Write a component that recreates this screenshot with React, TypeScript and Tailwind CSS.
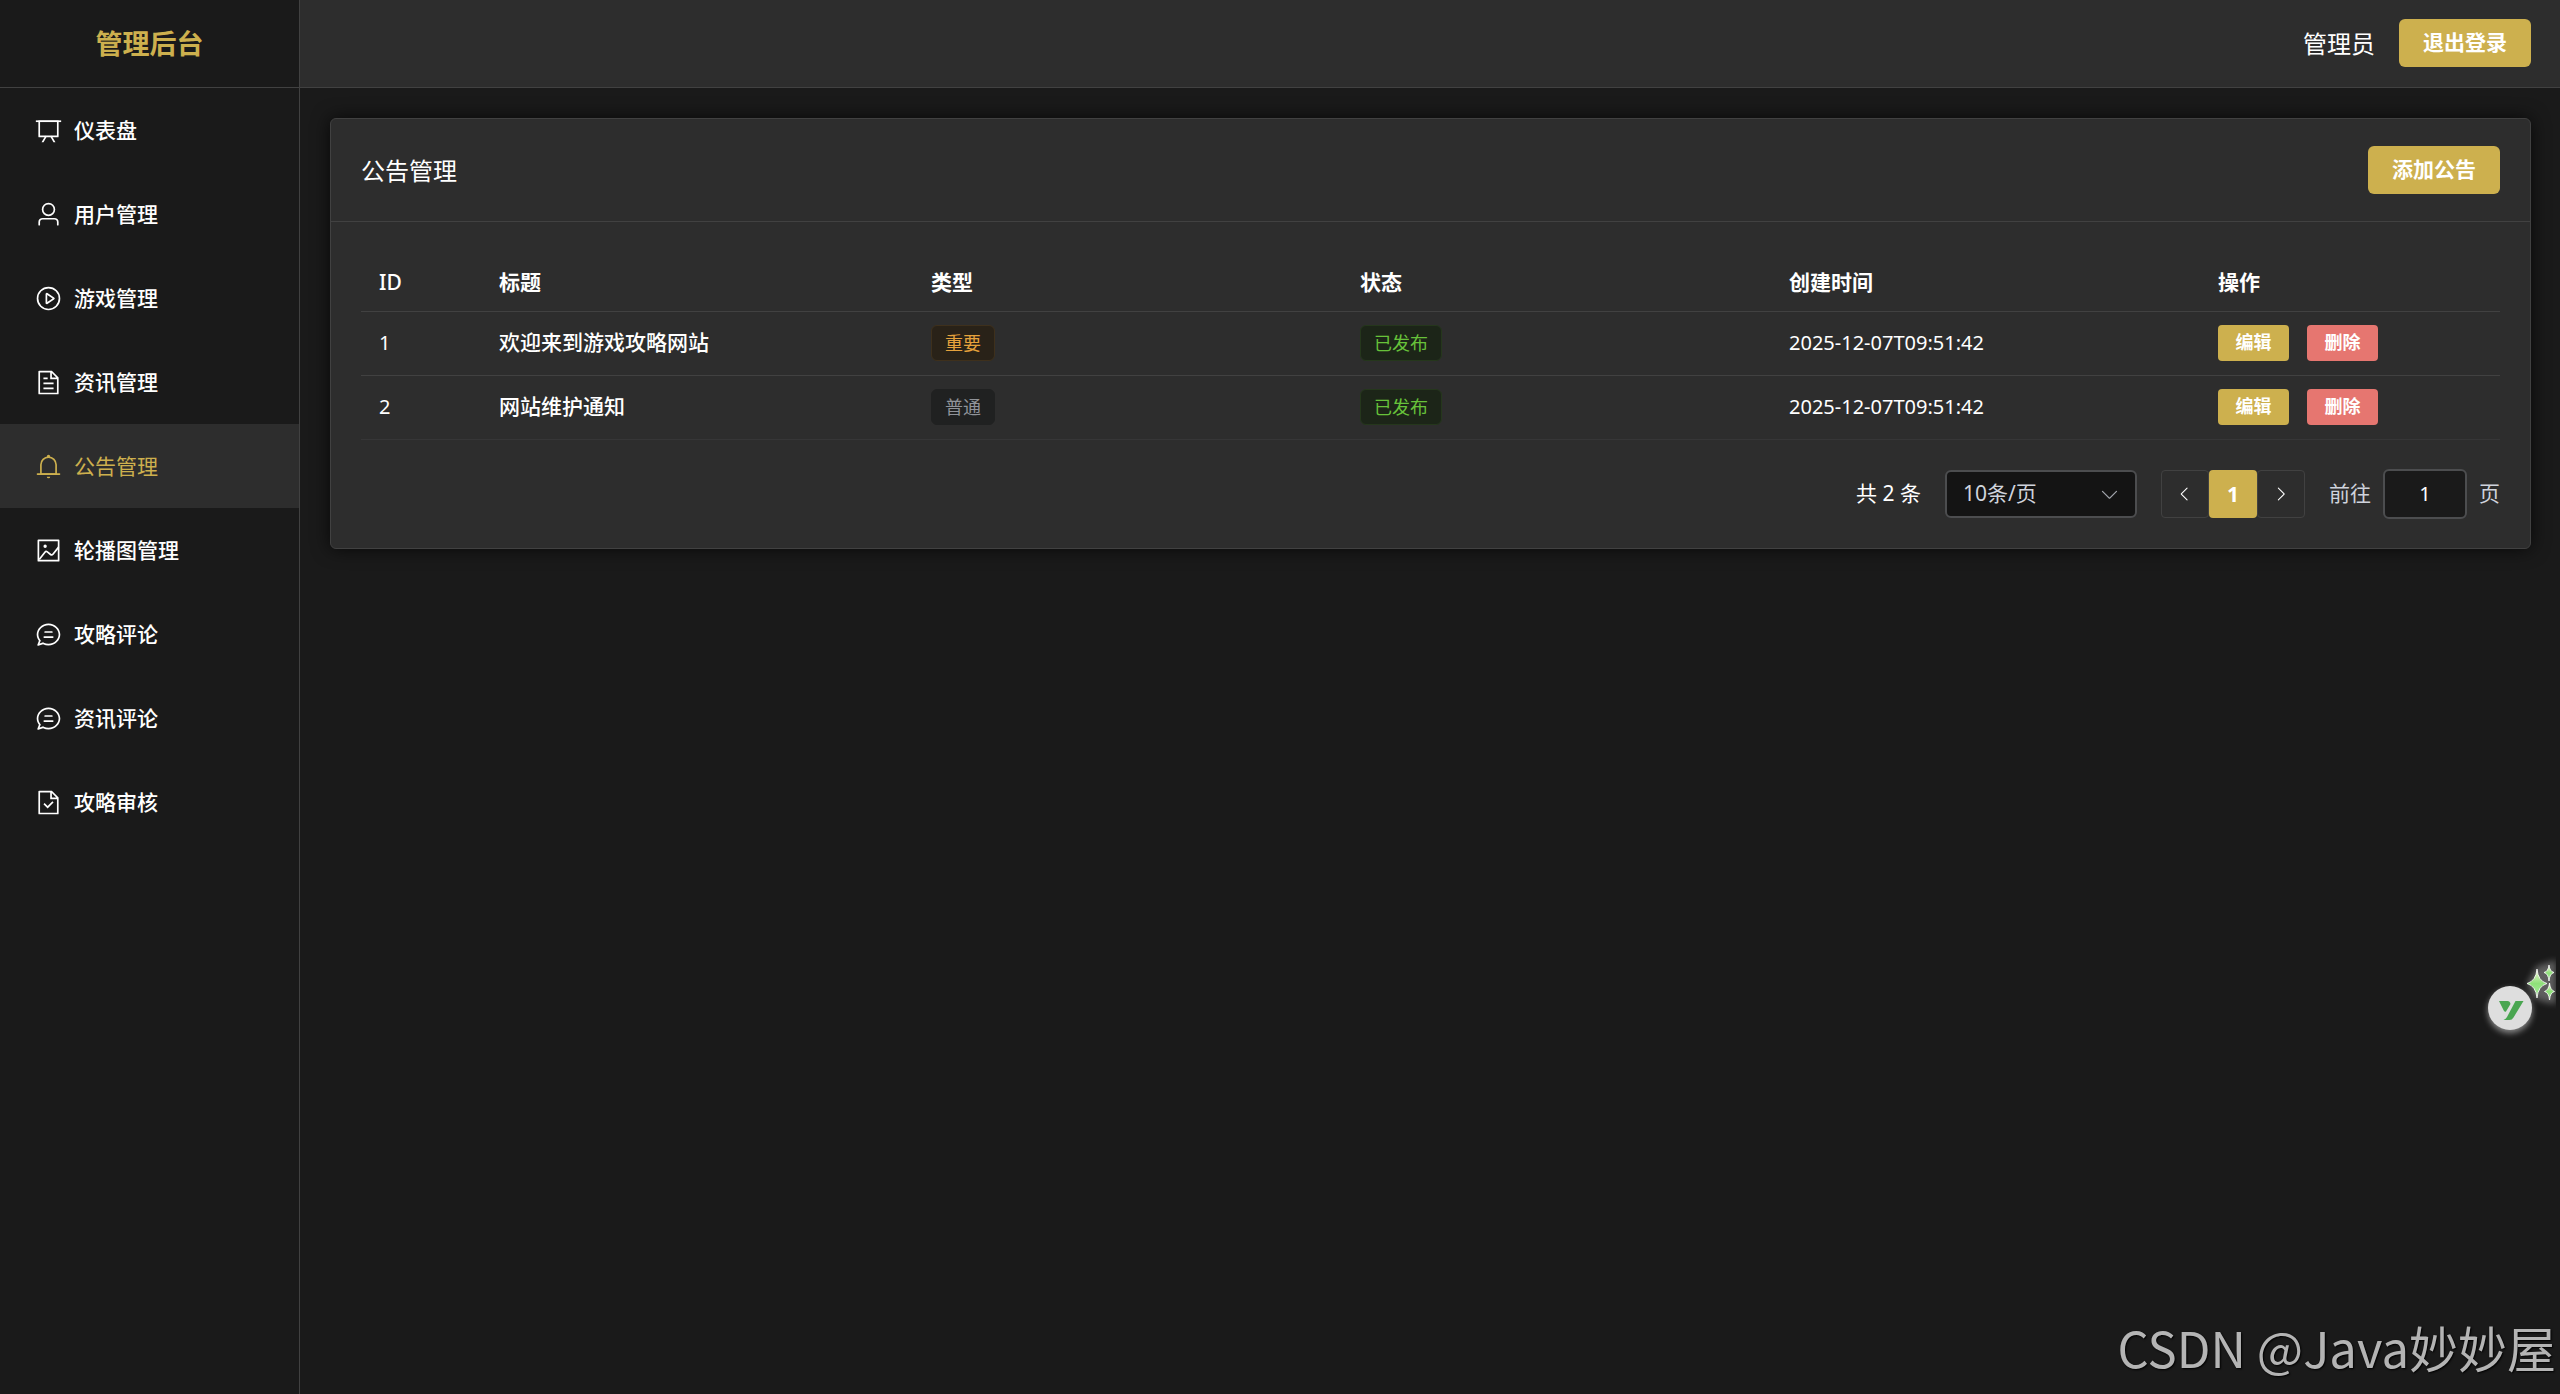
import React from "react";

const icons = {
  board: [
    "M32 128h960v64H32z",
    "M192 192v512h640V192zm-64-64h768v608a32 32 0 0 1-32 32H160a32 32 0 0 1-32-32z",
    "M322.176 960H248.32l144.64-250.56 55.424 32zm453.888 0h-73.856L576 741.44l55.424-32z",
  ],
  user: [
    "M512 512a192 192 0 1 0 0-384 192 192 0 0 0 0 384m0 64a256 256 0 1 1 0-512 256 256 0 0 1 0 512m320 320v-96a96 96 0 0 0-96-96H288a96 96 0 0 0-96 96v96a32 32 0 1 1-64 0v-96a160 160 0 0 1 160-160h448a160 160 0 0 1 160 160v96a32 32 0 1 1-64 0",
  ],
  play: [
    "M512 64a448 448 0 1 1 0 896 448 448 0 0 1 0-896m0 832a384 384 0 0 0 0-768 384 384 0 0 0 0 768m-48-247.616L668.608 512 464 375.616zm10.624-342.656 249.472 166.336a48 48 0 0 1 0 79.872L474.624 718.272A48 48 0 0 1 400 678.336V345.6a48 48 0 0 1 74.624-39.936z",
  ],
  doc: [
    "M832 384H576V128H192v768h640zm-26.496-64L640 154.496V320zM160 64h480l256 256v608a32 32 0 0 1-32 32H160a32 32 0 0 1-32-32V96a32 32 0 0 1 32-32m160 448h384v64H320zm0-192h160v64H320zm0 384h384v64H320z",
  ],
  bell: [
    "M512 64a64 64 0 0 1 64 64v64H448v-64a64 64 0 0 1 64-64",
    "M256 768h512V448a256 256 0 1 0-512 0zm256-640a320 320 0 0 1 320 320v384H192V448a320 320 0 0 1 320-320",
    "M96 768h832q32 0 32 32t-32 32H96q-32 0-32-32t32-32m352 128h128a64 64 0 0 1-128 0",
  ],
  picture: [
    "M160 160v704h704V160zm-32-64h768a32 32 0 0 1 32 32v768a32 32 0 0 1-32 32H128a32 32 0 0 1-32-32V128a32 32 0 0 1 32-32",
    "M384 288q64 0 64 64t-64 64-64-64 64-64M185.408 876.992l-50.816-38.912L350.72 556.032a96 96 0 0 1 134.592-17.856l1.856 1.472 122.88 99.136a32 32 0 0 0 44.992-4.864l216-269.888 49.92 39.936-215.808 269.824-.256.32a96 96 0 0 1-135.04 14.464l-122.88-99.072-.64-.512a32 32 0 0 0-44.8 5.952z",
  ],
  chat: [
    "m174.72 855.68 135.296-45.12 23.68 11.84C388.096 849.536 448.576 864 512 864c211.84 0 384-166.784 384-352S723.84 160 512 160 128 326.784 128 512c0 69.12 24.96 139.264 70.848 199.232l22.08 28.8-46.272 115.584zm-45.248 82.56A32 32 0 0 1 89.6 896l58.368-145.92C94.72 680.32 64 596.864 64 512 64 299.904 256 96 512 96s448 203.904 448 416-192 416-448 416a461.056 461.056 0 0 1-206.912-48.384l-175.616 58.56z",
    "M352 576h320q32 0 32 32t-32 32H352q-32 0-32-32t32-32m32-192h256q32 0 32 32t-32 32H384q-32 0-32-32t32-32",
  ],
  checked: [
    "M805.504 320 640 154.496V320zM832 384H576V128H192v768h640zM160 64h480l256 256v608a32 32 0 0 1-32 32H160a32 32 0 0 1-32-32V96a32 32 0 0 1 32-32m318.4 582.144 180.992-180.992L704.64 510.4 478.4 736.64 320 578.304l45.248-45.312z",
  ],
  down: [
    "M831.872 340.864 512 652.672 192.128 340.864a30.592 30.592 0 0 0-42.752 0 29.12 29.12 0 0 0 0 41.6L489.664 714.24a32 32 0 0 0 44.672 0l340.288-331.712a29.12 29.12 0 0 0 0-41.728 30.592 30.592 0 0 0-42.752 0z",
  ],
  left: [
    "M609.408 149.376 277.76 489.6a32 32 0 0 0 0 44.672l331.648 340.352a29.12 29.12 0 0 0 41.728 0 30.592 30.592 0 0 0 0-42.752L339.264 511.936l311.872-319.872a30.592 30.592 0 0 0 0-42.688 29.12 29.12 0 0 0-41.728 0z",
  ],
  right: [
    "M340.864 149.312a30.592 30.592 0 0 0 0 42.752L652.736 512 340.864 831.872a30.592 30.592 0 0 0 0 42.752 29.12 29.12 0 0 0 41.728 0L714.24 534.336a32 32 0 0 0 0-44.672L382.592 149.376a29.12 29.12 0 0 0-41.728 0z",
  ],
};

type IconName = keyof typeof icons;

function Icon({ name, className }: { name: IconName; className: string }) {
  return (
    <svg viewBox="0 0 1024 1024" fill="currentColor" aria-hidden="true" className={className}>
      {icons[name].map((d) => (
        <path key={d} d={d} />
      ))}
    </svg>
  );
}

const menu: { icon: IconName; label: string }[] = [
  { icon: "board", label: "仪表盘" },
  { icon: "user", label: "用户管理" },
  { icon: "play", label: "游戏管理" },
  { icon: "doc", label: "资讯管理" },
  { icon: "bell", label: "公告管理" },
  { icon: "picture", label: "轮播图管理" },
  { icon: "chat", label: "攻略评论" },
  { icon: "chat", label: "资讯评论" },
  { icon: "checked", label: "攻略审核" },
];

const rows = [
  { id: 1, title: "欢迎来到游戏攻略网站", type: "重要", time: "2025-12-07T09:51:42" },
  { id: 2, title: "网站维护通知", type: "普通", time: "2025-12-07T09:51:42" },
];

const tagStyles: Record<string, string> = {
  重要: "border-[#3e301c] bg-[#292218] text-[#e6a23c]",
  普通: "border-[#202121] bg-[#202121] text-[#909399]",
  已发布: "border-[#25371c] bg-[#1c2518] text-[#67c23a]",
};

function Tag({ label }: { label: string }) {
  return (
    <span
      className={`inline-flex h-9 items-center rounded-md border px-[13px] align-middle text-[18px] leading-none ${tagStyles[label]}`}
    >
      {label}
    </span>
  );
}

function PrimaryButton({ children }: { children: React.ReactNode }) {
  return (
    <button
      type="button"
      className="h-12 rounded-md bg-[#cdb04e] px-6 pb-0.5 text-[21px] font-bold leading-none text-white"
    >
      {children}
    </button>
  );
}

function SmallButton({ children, danger }: { children: React.ReactNode; danger?: boolean }) {
  return (
    <button
      type="button"
      className={`flex h-9 w-[71px] items-center justify-center rounded pb-0.5 text-[18px] font-bold leading-none text-white ${
        danger ? "bg-[#e67670]" : "bg-[#cdb04e]"
      }`}
    >
      {children}
    </button>
  );
}

function Sidebar() {
  return (
    <aside className="w-[300px] shrink-0 border-r border-[#414141] bg-[#1a1a1a]">
      <div className="flex h-22 items-center justify-center border-b border-[#414141] pt-0.5 text-[27px] font-bold text-[#cdb04e]">
        管理后台
      </div>
      <nav>
        {menu.map((item) => {
          const active = item.label === "公告管理";
          return (
            <a
              key={item.label}
              href="#"
              aria-current={active ? "page" : undefined}
              className={`flex h-21 items-center gap-2 px-[30px] text-[21px] ${
                active ? "bg-[#2d2d2d] text-[#cdb04e]" : "font-medium text-white"
              }`}
            >
              <span className="flex w-9 justify-center">
                <Icon name={item.icon} className="size-[27px]" />
              </span>
              <span className="pt-0.5">{item.label}</span>
            </a>
          );
        })}
      </nav>
    </aside>
  );
}

function Pagination() {
  return (
    <div className="mt-[30px] flex h-12 items-center justify-end text-[21px] text-[#cfd3dc]">
      <span className="mr-6 text-white">共 2 条</span>
      <div className="relative mr-6 h-12 w-48">
        <select
          aria-label="每页条数"
          className="size-full appearance-none rounded-md border-2 border-[#4c4d4f] bg-[#141414] pl-4 text-[21px]"
        >
          <option>10条/页</option>
        </select>
        <Icon name="down" className="pointer-events-none absolute right-[17px] top-[14px] size-[21px] text-[#a3a6ad]" />
      </div>
      <button
        type="button"
        aria-label="上一页"
        className="flex size-12 items-center justify-center rounded border border-[#414141]"
      >
        <Icon name="left" className="size-[18px] text-white" />
      </button>
      <button
        type="button"
        aria-current="page"
        className="size-12 rounded bg-[#cdb04e] pt-0.5 text-[21px] font-bold text-white"
      >
        1
      </button>
      <button
        type="button"
        aria-label="下一页"
        className="flex size-12 items-center justify-center rounded border border-[#414141]"
      >
        <Icon name="right" className="size-[18px] text-white" />
      </button>
      <label className="ml-6 flex items-center gap-3">
        前往
        <input
          type="text"
          defaultValue="1"
          aria-label="页码"
          className="h-[50px] w-[84px] rounded-md border-2 border-[#4c4d4f] bg-[#1a1a1a] text-center text-[20px] text-white"
        />
        页
      </label>
    </div>
  );
}

function Assistant() {
  return (
    <div className="fixed right-0 top-[950px]">
      <svg viewBox="0 0 90 100" className="h-[100px] w-[90px]" role="img" aria-label="助手">
        <defs>
          <linearGradient id="star" x1="0" y1="0" x2="0" y2="1">
            <stop offset="0" stopColor="#f6f6d8" />
            <stop offset="0.5" stopColor="#8fe07a" />
            <stop offset="1" stopColor="#a8eda0" />
          </linearGradient>
          <filter id="glow" x="-50%" y="-50%" width="200%" height="200%">
            <feGaussianBlur stdDeviation="3" />
          </filter>
          <clipPath id="edge">
            <path d="M0 0h86v100H0z" />
          </clipPath>
        </defs>
        <g clipPath="url(#edge)">
          <g fill="#ffffff" filter="url(#glow)">
            <circle cx="40" cy="61" r="22" opacity="0.5" />
            <path d="M57 34 67 16l19-6v44l-12-2-10-4z" opacity="0.3" />
          </g>
        </g>
        <circle cx="40" cy="58" r="22" fill="#dedede" />
        <path
          d="M29 51h8.500q2.500 0 3 3l-4.500 7.500q-1 .8-2-.5zM45.500 51H53.500L43.500 67.500Q42 70 39.500 70H33.500Q36 69 37 67z"
          fill="#4aa651"
        />
        <g fill="url(#star)" stroke="#ffffff" strokeWidth="0.800">
          <path d="M67 19q1 12 10 14.500-9 2.500-10 14.500-1-12-10-14.500 9-2.500 10-14.500z" />
          <path d="M79 15q.7 6.500 5 7.500-4.300 1-5 8.500-.7-7.500-5-8.500 4.300-1 5-7.500z" />
          <path d="M79.500 33q.7 7 5 8.500-4.300 1-5 8.500-.7-7.500-5-8.500 4.300-1.500 5-8.500z" />
        </g>
      </svg>
    </div>
  );
}

export default function App() {
  return (
    <div className="flex min-h-screen bg-[#1a1a1a] font-['Noto_Sans','Noto_Sans_CJK_SC',sans-serif] text-white" lang="zh-CN">
      <Sidebar />
      <div className="flex min-w-0 flex-1 flex-col">
        <header className="flex h-22 items-center justify-end gap-6 border-b border-[#414141] bg-[#2d2d2d] pb-px pr-[29px]">
          <span className="pt-0.5 text-[24px]">管理员</span>
          <PrimaryButton>退出登录</PrimaryButton>
        </header>
        <main className="p-[30px] pr-[29px]">
          <section className="rounded-md border border-[#414141] bg-[#2d2d2d] shadow-[0_0_18px_rgba(0,0,0,0.72)]">
            <div className="flex items-center justify-between border-b border-[#414141] px-[30px] py-[27px]">
              <h1 className="pt-0.5 text-[24px] leading-none">公告管理</h1>
              <PrimaryButton>添加公告</PrimaryButton>
            </div>
            <div className="p-[30px]">
              <table className="w-full table-fixed border-collapse text-left text-[21px]">
                <colgroup>
                  <col className="w-[120px]" />
                  <col className="w-[20.2%]" />
                  <col />
                  <col />
                  <col />
                  <col className="w-[300px]" />
                </colgroup>
                <thead>
                  <tr className="h-[59px] border-b border-[#414141]">
                    {["ID", "标题", "类型", "状态", "创建时间", "操作"].map((h) => (
                      <th key={h} scope="col" className="px-[18px] pt-0.5 font-bold first:font-medium">
                        {h}
                      </th>
                    ))}
                  </tr>
                </thead>
                <tbody>
                  {rows.map((r) => (
                    <tr key={r.id} className="h-16 border-b border-[#414141] last:border-[#363637]">
                      <td className="px-[18px] text-[20px]">{r.id}</td>
                      <td className="px-[18px] font-medium">{r.title}</td>
                      <td className="px-[18px]">
                        <Tag label={r.type} />
                      </td>
                      <td className="px-[18px]">
                        <Tag label="已发布" />
                      </td>
                      <td className="px-[18px] text-[20px]">{r.time}</td>
                      <td className="px-[18px]">
                        <div className="flex gap-[18px]">
                          <SmallButton>编辑</SmallButton>
                          <SmallButton danger>删除</SmallButton>
                        </div>
                      </td>
                    </tr>
                  ))}
                </tbody>
              </table>
              <Pagination />
            </div>
          </section>
        </main>
      </div>
      <Assistant />
      <div className="fixed bottom-3 right-1 font-['Noto_Sans_CJK_SC',sans-serif] text-[49px] leading-[70px] text-[#b4b4b4] [text-shadow:1px_1px_2px_#000]">
        CSDN @Java妙妙屋
      </div>
    </div>
  );
}
